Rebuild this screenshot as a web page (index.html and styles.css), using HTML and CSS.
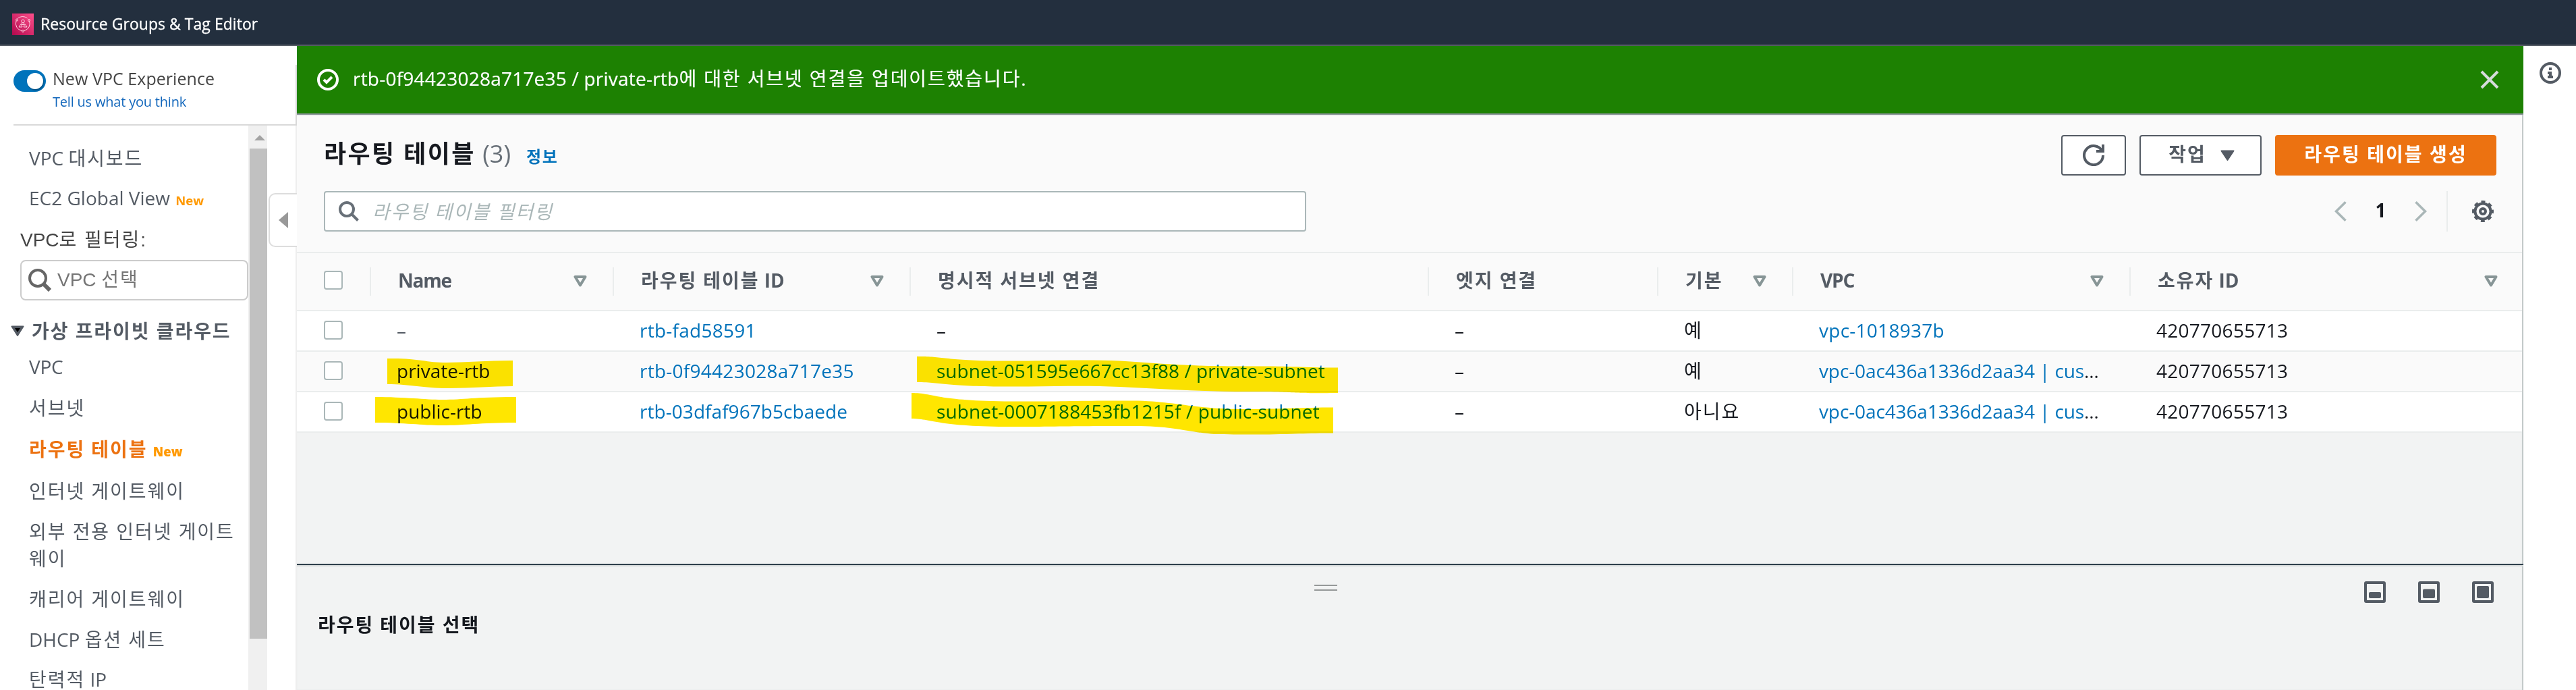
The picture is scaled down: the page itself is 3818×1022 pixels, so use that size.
FILE: index.html
```
<!DOCTYPE html>
<html lang="ko">
<head>
<meta charset="utf-8">
<title>라우팅 테이블 | VPC</title>
<link rel="stylesheet" href="styles.css">
</head>
<body>
<header class="topbar">
  <svg class="service-icon" viewBox="0 0 32 32">
    <defs><linearGradient id="pink" x1="0" y1="1" x2="1" y2="0"><stop offset="0" stop-color="#b0084d"/><stop offset="1" stop-color="#ff4f8b"/></linearGradient></defs>
    <rect width="32" height="32" fill="url(#pink)"/>
    <g fill="none" stroke="#ffd3e2" stroke-width="1">
      <path d="M8 7.500a11 11 0 0 1 14.500-.5M25.500 11a11 11 0 0 1-7.500 14.500M14 25.500A11 11 0 0 1 6 11"/>
      <circle cx="7" cy="9.500" r="1.500"/><circle cx="25" cy="10" r="1.500"/><circle cx="16" cy="26" r="1.500"/>
      <circle cx="16" cy="11.500" r="2.300"/><path d="M14.500 13.500v3l3 0v-3M13 15.500l-3 4.500h5l-1.500-4M19 15.500l3 4.500h-5l1.500-4"/>
    </g>
  </svg>
  <span>Resource Groups &amp; Tag Editor</span>
</header>
<div class="layout">
  <aside class="sidebar">
    <div class="experience">
      <div class="toggle"><i></i></div>
      <div class="experience-text"><div class="experience-name">New VPC Experience</div><a>Tell us what you think</a></div>
    </div>
    <div class="nav-area">
      <nav class="nav">
        <a class="item first">VPC <span class="ko">대시보드</span></a>
        <a class="item ec2">EC2 Global View <b class="new">New</b></a>
        <div class="filter-label">VPC<span class="ko">로 필터링</span>:</div>
        <div class="vpc-select">
          <svg viewBox="0 0 34 34"><circle cx="14" cy="14" r="12" fill="none" stroke="#666" stroke-width="4"/><path d="M22.500 22.500 32 32" stroke="#666" stroke-width="6"/></svg>
          <span>VPC <span class="ko">선택</span></span>
        </div>
        <div class="group"><svg viewBox="0 0 20 16"><path d="M1.500 1.500h17L10 15z" fill="#545b64" stroke="#545b64" stroke-width="2" stroke-linejoin="round"/><path d="M6 4h8l-4 6z" fill="#000"/></svg><span class="ko">가상 프라이빗 클라우드</span></div>
        <a class="item vpc">VPC</a>
        <a class="item subnet ko">서브넷</a>
        <a class="item active"><span class="ko">라우팅 테이블</span> <b class="new">New</b></a>
        <a class="item igw ko">인터넷 게이트웨이</a>
        <a class="item ko">외부 전용 인터넷 게이트웨이</a>
        <a class="item ko">캐리어 게이트웨이</a>
        <a class="item">DHCP <span class="ko">옵션 세트</span></a>
        <a class="item last"><span class="ko">탄력적</span> IP</a>
      </nav>
      <div class="scrollbar"><svg viewBox="0 0 16 8"><path d="M8 0l8 8H0z" fill="#a3a3a3"/></svg><div class="thumb"></div></div>
      <div class="gutter"></div>
    </div>
    <div class="collapse"><svg viewBox="0 0 14 24"><path d="M14 0v24L0 12z" fill="#999"/></svg></div>
  </aside>
  <main class="main">
    <div class="flash">
      <svg class="i32" viewBox="0 0 16 16" fill="none" stroke="#fff" stroke-width="2"><circle cx="8" cy="8" r="7"/><path d="m5 8 2 2 4-4"/></svg>
      <p>rtb-0f94423028a717e35 / private-rtb<span class="ko">에 대한 서브넷 연결을 업데이트했습니다.</span></p>
      <svg class="i32 close" viewBox="0 0 16 16" fill="none" stroke="#d5dbdb" stroke-width="2"><path d="m2 2 12 12M14 2 2 14"/></svg>
    </div>
    <section class="panel-head">
      <div class="title-row">
        <h1><span class="ko">라우팅 테이블</span> <small>(3)</small></h1><a class="info">정보</a>
        <div class="actions">
          <button class="btn refresh"><svg class="i32" viewBox="0 0 16 16" fill="none" stroke="#545b64" stroke-width="2"><path d="M10 5h5V0M15 8a7 7 0 1 1-.7-3"/></svg></button>
          <button class="btn menu"><span class="ko">작업</span><svg viewBox="0 0 21 16"><path d="M1.500 1.500h18L10.500 15z" fill="#545b64" stroke="#545b64" stroke-width="2" stroke-linejoin="round"/></svg></button>
          <button class="btn primary ko">라우팅 테이블 생성</button>
        </div>
      </div>
      <div class="tools-row">
        <div class="search"><svg viewBox="0 0 30 30" fill="none" stroke="#687078" stroke-width="4"><circle cx="12" cy="12" r="10"/><path d="m19 19 9.500 9.500"/></svg><span class="ko">라우팅 테이블 필터링</span></div>
        <div class="pager">
          <svg class="chev" viewBox="0 0 18 30" fill="none" stroke="#aab7b8" stroke-width="3.600"><path d="M16.500 1.300 2.500 15l14 13.700"/></svg>
          <b>1</b>
          <svg class="chev" viewBox="0 0 18 30" fill="none" stroke="#aab7b8" stroke-width="3.600"><path d="M1.500 1.300 15.500 15l-14 13.700"/></svg>
          <svg class="i32 gear" viewBox="0 0 16 16" fill="none" stroke="#545b64" stroke-width="2"><circle cx="8" cy="8" r="5.800"/><circle cx="8" cy="8" r="7" stroke-dasharray="2.900 2.598" stroke-dashoffset="1.450"/><circle cx="8" cy="8" r="2"/></svg>
        </div>
      </div>
    </section>
    <section class="table">
      <div class="row head">
        <div class="check"><i></i></div>
        <div class="th"><span class="latin">Name</span><svg class="sort" viewBox="0 0 20 17"><path d="M2.500 2h15L10 14.500z"/></svg></div>
        <div class="th"><span><span class="ko">라우팅 테이블</span> ID</span><svg class="sort" viewBox="0 0 20 17"><path d="M2.500 2h15L10 14.500z"/></svg></div>
        <div class="th"><span class="ko">명시적 서브넷 연결</span></div>
        <div class="th"><span class="ko">엣지 연결</span></div>
        <div class="th"><span class="ko">기본</span><svg class="sort" viewBox="0 0 20 17"><path d="M2.500 2h15L10 14.500z"/></svg></div>
        <div class="th"><span class="latin">VPC</span><svg class="sort" viewBox="0 0 20 17"><path d="M2.500 2h15L10 14.500z"/></svg></div>
        <div class="th"><span><span class="ko">소유자</span> ID</span><svg class="sort" viewBox="0 0 20 17"><path d="M2.500 2h15L10 14.500z"/></svg></div>
      </div>
      <div class="row">
        <div class="check"><i></i></div>
        <div class="td muted">–</div><div class="td"><a>rtb-fad58591</a></div><div class="td">–</div><div class="td">–</div><div class="td">예</div><div class="td"><a>vpc-1018937b</a></div><div class="td">420770655713</div>
      </div>
      <div class="row alt">
        <div class="check"><i></i></div>
        <div class="td name">private-rtb</div><div class="td"><a>rtb-0f94423028a717e35</a></div><div class="td sub"><a>subnet-051595e667cc13f88 / private-subnet</a></div><div class="td">–</div><div class="td">예</div><div class="td vpcid"><a>vpc-0ac436a1336d2aa34 | cus</a>…</div><div class="td">420770655713</div>
      </div>
      <div class="row">
        <div class="check"><i></i></div>
        <div class="td name">public-rtb</div><div class="td rtb"><a>rtb-03dfaf967b5cbaede</a></div><div class="td sub wide"><a>subnet-0007188453fb1215f / public-subnet</a></div><div class="td">–</div><div class="td ko">아니요</div><div class="td vpcid"><a>vpc-0ac436a1336d2aa34 | cus</a>…</div><div class="td">420770655713</div>
      </div>
      <svg class="marker" viewBox="540 515 1460 140">
        <path d="M574 531C620 530 630 537 662 537 690 537 720 534 760 534V572C730 572 700 575 665 575 625 575 610 569 574 569Z"/>
        <path d="M556 588C600 588 630 592 655 592 690 592 700 588 765 588V626C710 626 690 630 655 630 625 630 600 626 556 626Z"/>
        <path d="M1359 528C1395 527 1400 534 1480 534.500 1550 535 1600 532 1660 534.500 1720 538 1760 543 1850 542.500 1920 542 1930 544.500 1983 544.500V582C1900 583 1930 580 1850 580 1780 580 1720 576 1660 573 1600 570 1550 573 1480 572.500 1400 572 1400 566.500 1359 566Z"/>
        <path d="M1351 582C1385 582 1385 594 1500 594.500 1570 595 1600 593 1680 593.500 1740 594 1770 606 1840 606 1900 606 1930 603.500 1976 603.500V641.500C1930 641 1900 645 1800 643 1760 640 1740 631 1680 631 1600 630.500 1570 632 1500 632 1390 632 1385 621 1351 620Z"/>
      </svg>
    </section>
    <section class="split">
      <div class="grip"></div>
      <div class="split-icons">
        <svg class="i32" viewBox="0 0 32 32"><rect x="2" y="2" width="28" height="28" rx="1" fill="none" stroke="#545b64" stroke-width="4"/><rect x="7" y="16" width="18" height="9" rx="2" fill="#545b64"/></svg>
        <svg class="i32" viewBox="0 0 32 32"><rect x="2" y="2" width="28" height="28" rx="1" fill="none" stroke="#545b64" stroke-width="4"/><rect x="7" y="11.500" width="18" height="13.500" rx="2" fill="#545b64"/></svg>
        <svg class="i32" viewBox="0 0 32 32"><rect x="2" y="2" width="28" height="28" rx="1" fill="none" stroke="#545b64" stroke-width="4"/><rect x="7" y="7" width="18" height="18" rx="2" fill="#545b64"/></svg>
      </div>
      <h2 class="ko">라우팅 테이블 선택</h2>
    </section>
  </main>
  <aside class="help"><svg class="i32" viewBox="0 0 16 16"><circle cx="8" cy="8" r="7" fill="none" stroke="#545b64" stroke-width="2"/><path d="M7 4h2v2H7zM6 7h3v3h1v2H6v-2h1V9H6z" fill="#545b64"/></svg></aside>
</div>
</body>
</html>
```
FILE: styles.css
```
* { box-sizing: border-box; }
body { margin: 0; width: 3818px; height: 1022px; overflow: hidden; background: #fff; color: #16191f; font: 28px/40px "Open Sans", "Noto Sans CJK KR", sans-serif; white-space: nowrap; }
svg { display: block; flex: none; }
.ko { letter-spacing: 1.95px; }
.i32 { width: 32px; height: 32px; }

.topbar { height: 68px; padding: 20px 18px 0; display: flex; gap: 10px; background: #232f3e; border-bottom: 2px solid #545b64; color: #fff; font-size: 23px; line-height: 31px; letter-spacing: .04px; -webkit-text-stroke: .3px #fff; }
.service-icon { width: 32px; height: 32px; }
.layout { display: grid; grid-template-columns: 440px 3300px 78px; height: 954px; }

/* left navigation */
.sidebar { position: relative; display: flex; flex-direction: column; overflow: hidden; }
.experience { height: 118px; margin: 0 0 0 20px; padding-top: 30px; display: flex; gap: 10px; border-bottom: 2px solid #d9d9d9; border-right: 2px solid #e2e2e2; border-image: linear-gradient(transparent 30px, #d9d9d9 30px) 2; border-top: 0; border-left: 0; }
.experience-text { color: #444; }
.experience-name { font-size: 25px; line-height: 37px; letter-spacing: .05px; }
.experience a { display: block; font-size: 20px; line-height: 32px; letter-spacing: -.2px; color: #1166bb; }
.toggle { width: 48px; height: 32px; margin-top: 6px; padding: 4px; border-radius: 16px; background: #0073bb; display: flex; justify-content: flex-end; }
.toggle i { width: 24px; height: 24px; border-radius: 50%; background: #fff; box-shadow: 1px 2px 2px rgba(0,0,0,.3); }
.nav-area { flex: 1; min-height: 0; display: grid; grid-template-columns: 368px 28px 44px; }
.nav { padding-top: 28px; }
.item { display: block; margin: 20px 0 0 43px; width: 307px; color: #545b64; white-space: normal; word-break: break-all; }
.item.first { margin-top: 0; }
.item.ec2 { margin-top: 19px; }
.item.vpc { margin-top: 13px; letter-spacing: -.3px; }
.item.subnet { margin-top: 21px; }
.item.active { margin-top: 21px; font-weight: 700; color: #ec7211; }
.item.igw { margin-top: 22px; }
.item.last { line-height: 35px; margin-top: 22px; }
.new { font-size: 18.5px; line-height: 1; color: #ff9900; letter-spacing: 0; margin-left: 1px; }
.filter-label { margin: 23px 0 0 30px; font-family: "Liberation Sans", "Noto Sans CJK KR", sans-serif; color: #444; }
.vpc-select { margin: 9px 0 0 30px; height: 60px; padding: 0 10px; display: flex; align-items: center; gap: 9px; border: 2px solid #ccc; border-radius: 8px; font-family: "Liberation Sans", "Noto Sans CJK KR", sans-serif; color: #757575; }
.vpc-select svg { width: 34px; height: 34px; }
.group { margin: 25px 0 0 16px; display: flex; align-items: center; gap: 11px; font-weight: 700; color: #545b64; }
.group svg { width: 20px; height: 16px; }
.scrollbar { background: #f0f0f0; padding-left: 2px; }
.scrollbar svg { width: 16px; height: 8px; margin: 14px 0 12px 7px; }
.thumb { height: 726px; background: #c1c1c1; }
.gutter { border-right: 2px solid #eee; }
.collapse { position: absolute; left: 398px; top: 218px; width: 42px; height: 80px; border: 2px solid #ddd; border-right: 0; border-radius: 10px 0 0 10px; background: #fff; display: flex; align-items: center; padding-left: 13px; }
.collapse svg { width: 14px; height: 24px; }

/* content */
.main { display: flex; flex-direction: column; position: relative; background: #f2f3f3; box-shadow: inset -2px 0 1px #bfc6c6; }
.flash { height: 102px; padding: 0 34px 0 30px; display: flex; align-items: center; gap: 21px; background: #1d8102; border-bottom: 2px solid #879196; color: #fff; }
.flash p { margin: 0 0 4px; letter-spacing: .22px; -webkit-text-stroke: .2px #fff; }
.flash .ko { letter-spacing: 1.9px; }
.close { margin-left: auto; }
.panel-head { height: 205px; padding: 30px 40px 0; background: #fafafa; border-bottom: 2px solid #eaeded; box-shadow: inset 0 2px #eef0f0; margin-right: 2px; }
.title-row { display: flex; height: 60px; }
h1 { margin: 0; font-size: 36px; line-height: 56px; font-weight: 700; }
h1 .ko { letter-spacing: 2.4px; }
h1 small { font-size: 36px; font-weight: 400; color: #687078; margin-left: 1px; }
.info { margin-left: 23px; padding-top: 4px; line-height: 56px; font-size: 24px; letter-spacing: 1.6px; font-weight: 700; color: #0073bb; }
.actions { margin-left: auto; display: flex; gap: 20px; margin-right: -2px; }
.btn { height: 60px; display: flex; align-items: center; justify-content: center; border: 2px solid #545b64; border-radius: 4px; background: #fff; color: #545b64; font: inherit; font-weight: 700; padding: 0; }
.refresh { width: 96px; }
.menu { width: 181px; gap: 21px; padding-left: 3px; }
.menu span, .primary { padding-bottom: 4px; }
.menu svg { width: 21px; height: 16px; }
.primary { width: 328px; border-color: #ec7211; background: #ec7211; color: #fff; letter-spacing: 2.1px; }
.tools-row { display: flex; margin-top: 23px; height: 60px; }
.search { width: 1456px; height: 60px; padding: 0 20px; display: flex; align-items: center; gap: 20px; border: 2px solid #aab7b8; border-radius: 4px; background: #fff; color: #aab7b8; font-style: italic; }
.search svg { width: 30px; height: 30px; }
.pager { margin-left: auto; margin-right: 2px; display: flex; align-items: center; }
.pager b { width: 101px; padding-bottom: 4px; text-align: center; }
.chev { width: 18px; height: 30px; }
.gear { box-sizing: content-box; margin-left: 29px; padding: 14px 0 14px 36px; border-left: 2px solid #eaeded; }

.table { position: relative; flex: none; margin-right: 2px; }
.row { display: grid; grid-template-columns: 108px 360px 440px 768px 340px 200px 500px 582px; height: 60px; background: #fff; border-bottom: 2px solid #eaeded; line-height: 56px; }
.row.alt { background: #fafafa; }
.row.head { height: 86px; background: #fafafa; line-height: 80px; font-weight: 700; color: #545b64; }
.check { padding: 14px 0 0 40px; }
.head .check { padding-top: 26px; }
.check i { display: block; width: 28px; height: 28px; border: 2px solid #aab7b8; border-radius: 4px; background: #fff; }
.th { display: flex; padding-right: 38px; }
.th::before { content: ""; width: 2px; height: 42px; margin: 21px 40px 0 0; background: #eaeded; }
.th .latin { letter-spacing: -1.2px; }
.th:last-child { padding-right: 36px; }
.sort { width: 20px; height: 17px; margin: 33px 0 0 auto; fill: none; stroke: #879596; stroke-width: 4; stroke-linejoin: round; }
.td { padding-left: 40px; letter-spacing: .26px; }
.td.ko { letter-spacing: 1.95px; }
.td.rtb { letter-spacing: .05px; }
.td a { color: #0073bb; }
.td.muted { color: #545b64; }
.td.sub { letter-spacing: .02px; }
.td.sub.wide { letter-spacing: .12px; }
.td.name { letter-spacing: 0; }
.td.vpcid { letter-spacing: -.12px; }
.marker { position: absolute; left: 100px; top: 140px; width: 1460px; height: 140px; fill: #ffe600; mix-blend-mode: multiply; }

.split { position: absolute; left: 0; right: 0; top: 767px; height: 187px; border-top: 2px solid #2f3f4b; box-shadow: inset 0 2px 1px #d5d9d9; }
.grip { width: 34px; height: 9px; margin: 29px 0 0 1508px; border: solid #959898; border-width: 2px 0; }
.split-icons { display: flex; gap: 48px; justify-content: flex-end; margin: -14px 44px 0 0; }
.split h2 { margin: 12px 0 0 31px; font-size: 28px; line-height: 40px; }
.help { padding: 24px 0 0 24px; }
```
